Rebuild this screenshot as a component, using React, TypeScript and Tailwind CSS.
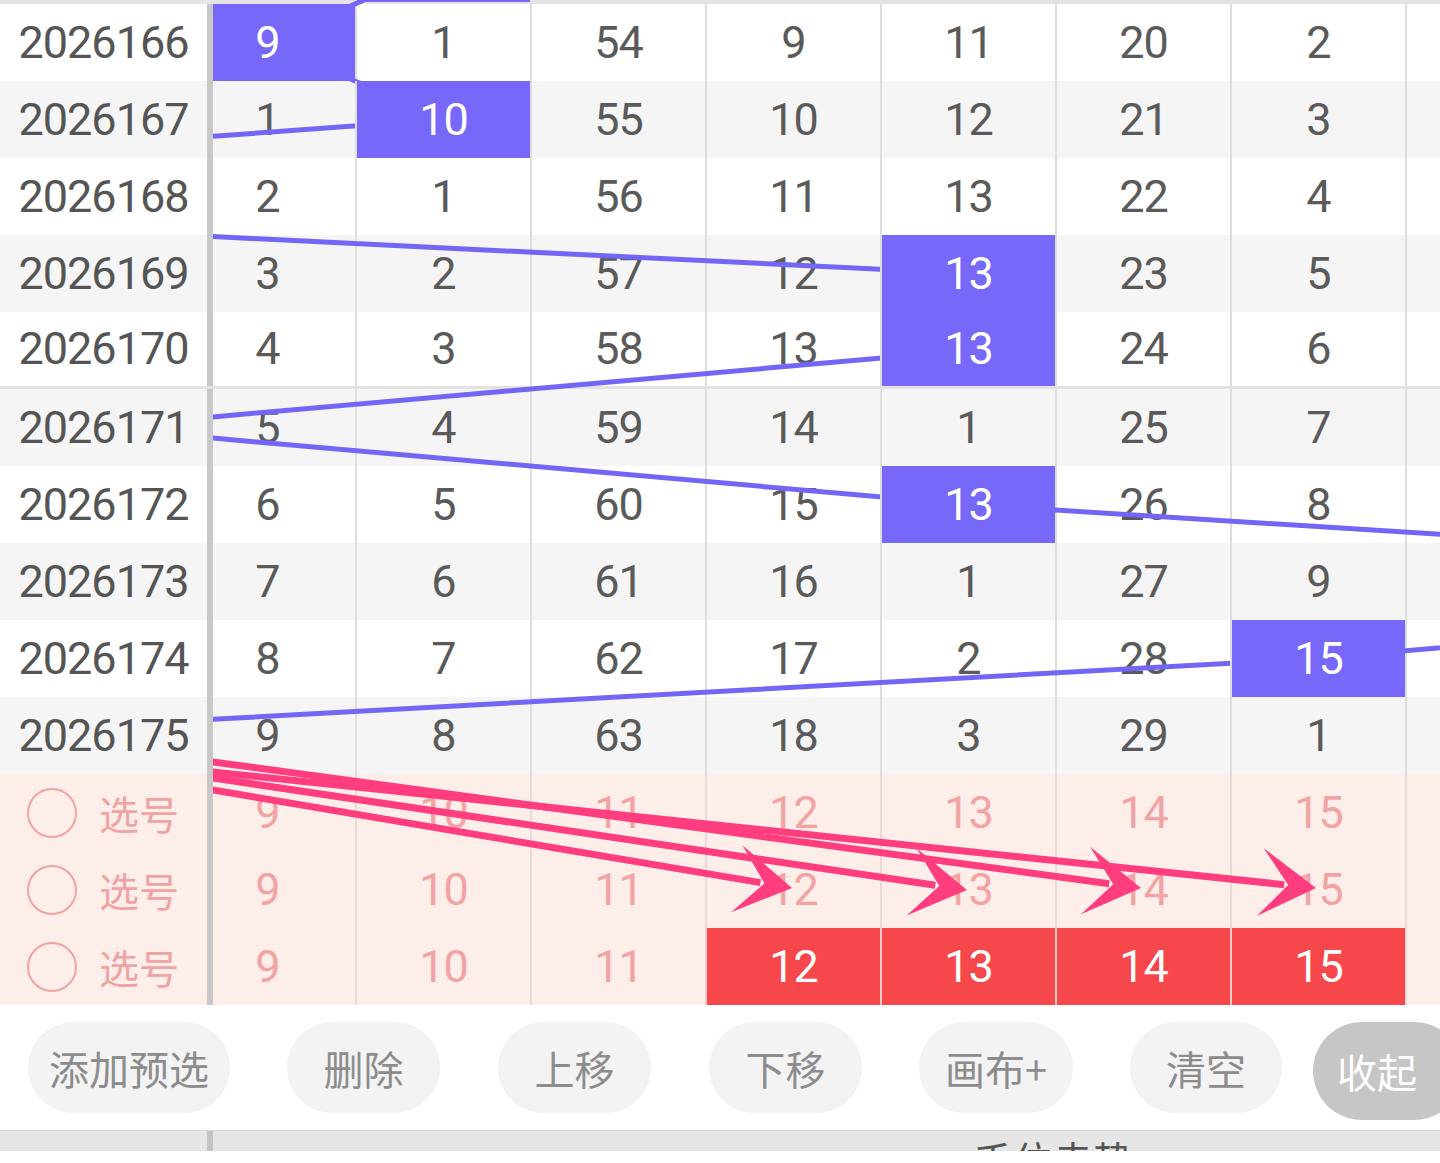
import React from "react";

type Row = {
  id: string;
  nums: number[];
  hit: number[];
};

const rows: Row[] = [
  { id: "2026166", nums: [9, 1, 54, 9, 11, 20, 2], hit: [0] },
  { id: "2026167", nums: [1, 10, 55, 10, 12, 21, 3], hit: [1] },
  { id: "2026168", nums: [2, 1, 56, 11, 13, 22, 4], hit: [] },
  { id: "2026169", nums: [3, 2, 57, 12, 13, 23, 5], hit: [4] },
  { id: "2026170", nums: [4, 3, 58, 13, 13, 24, 6], hit: [4] },
  { id: "2026171", nums: [5, 4, 59, 14, 1, 25, 7], hit: [] },
  { id: "2026172", nums: [6, 5, 60, 15, 13, 26, 8], hit: [4] },
  { id: "2026173", nums: [7, 6, 61, 16, 1, 27, 9], hit: [] },
  { id: "2026174", nums: [8, 7, 62, 17, 2, 28, 15], hit: [6] },
  { id: "2026175", nums: [9, 8, 63, 18, 3, 29, 1], hit: [] },
];

const picks = [
  { red: [] as number[] },
  { red: [] as number[] },
  { red: [3, 4, 5, 6] },
];

const pickNums = [9, 10, 11, 12, 13, 14, 15];

const buttons = [
  { label: "添加预选", w: "w-[202px]", ml: "ml-[28px]" },
  { label: "删除", w: "w-[153px]", ml: "ml-[57px]" },
  { label: "上移", w: "w-[153px]", ml: "ml-[58px]" },
  { label: "下移", w: "w-[153px]", ml: "ml-[58px]" },
  { label: "画布+", w: "w-[154px]", ml: "ml-[57px]" },
  { label: "清空", w: "w-[152px]", ml: "ml-[57px]" },
];

// trend line geometry, in page pixels
const TOP = 4;
const ROW_H = 77;
const cx = (c: number) => 267.5 + 175 * c;
const cy = (r: number) => TOP + ROW_H * r + 38.5;

// [column, row] of each hit, including columns scrolled out of view
const trend: [number, number][] = [
  [1, -1],
  [0, 0],
  [1, 1],
  [-5, 2],
  [4, 3],
  [4, 4],
  [-1, 5],
  [4, 6],
  [11, 7],
  [6, 8],
  [-2, 9],
];

const arrows = [
  { from: [213, 790], to: [792, 888] },
  { from: [213, 778], to: [967, 890] },
  { from: [213, 762], to: [1141, 888] },
  { from: [213, 772], to: [1316, 888] },
];

function arrowParts(from: number[], to: number[]) {
  const [fx, fy] = from;
  const [tx, ty] = to;
  const dx = tx - fx;
  const dy = ty - fy;
  const len = Math.hypot(dx, dy);
  const ux = dx / len;
  const uy = dy / len;
  const nx = -uy;
  const ny = ux;
  const back = 56;
  const side = 34;
  const notch = 28;
  const head = [
    [tx, ty],
    [tx - ux * back + nx * side, ty - uy * back + ny * side],
    [tx - ux * notch, ty - uy * notch],
    [tx - ux * back - nx * side, ty - uy * back - ny * side],
  ]
    .map((p) => p.join(","))
    .join(" ");
  const start = [fx - ux * 80, fy - uy * 80];
  const end = [tx - ux * (notch + 4), ty - uy * (notch + 4)];
  return { head, start, end };
}

const numFont = "font-['Roboto','Noto_Sans',sans-serif] text-[45px] tracking-[-1px]";
const cjkFont = "font-['Noto_Sans_CJK_SC','Noto_Sans',sans-serif]";

function colClass(c: number) {
  if (c === 0) return "w-[142px] pr-[33px]";
  return "w-[175px] border-l-2";
}

export default function App() {
  return (
    <div className="w-[1440px] h-[1163px] overflow-hidden bg-white">
      <div className="relative">
        {/* separator left over from the previous group */}
        <div className="h-1 bg-[#e4e4e4] flex">
          <div className="w-[357px]" />
          <div className="w-[173px] h-[2px] bg-[#7768fa]" />
        </div>

        {rows.map((row, r) => (
          <div
            key={row.id}
            className={`flex h-[77px] ${r % 2 === 0 ? "bg-white" : "bg-[#f5f5f5]"} ${
              r === 4 ? "border-b-[3px] border-[#e2e2e2]" : ""
            }`}
          >
            <div
              className={`w-[213px] shrink-0 border-r-[6px] border-[#c8c8c8] flex items-center justify-center text-[#555] ${numFont}`}
            >
              {row.id}
            </div>
            {row.nums.map((n, c) => {
              const hit = row.hit.includes(c);
              return (
                <div
                  key={c}
                  className={`${colClass(c)} shrink-0 border-[#dddddd] flex items-center justify-center ${numFont} ${
                    hit ? "relative z-20 bg-[#7768fa] text-white" : "text-[#5a5a5a]"
                  }`}
                >
                  {n}
                </div>
              );
            })}
            <div className="flex-1 border-l-2 border-[#dddddd]" />
          </div>
        ))}

        {picks.map((p, i) => (
          <div key={i} className="flex h-[77px] bg-[#fdeee9]">
            <div className="w-[213px] shrink-0 border-r-[6px] border-[#c8c8c8] flex items-center pl-[27px]">
              <div className="w-[50px] h-[50px] rounded-full border-[2.5px] border-[#f0a3a3]" />
              <span className={`ml-[22px] text-[40px] leading-none text-[#f0a3a3] ${cjkFont}`}>
                选号
              </span>
            </div>
            {pickNums.map((n, c) => {
              const red = p.red.includes(c);
              return (
                <div
                  key={c}
                  className={`${colClass(c)} shrink-0 flex items-center justify-center ${numFont} ${
                    red
                      ? "bg-[#f6474a] text-white border-[#f7c9c9]"
                      : "text-[#f2a3a3] border-[#e6dbd8]"
                  }`}
                >
                  {n}
                </div>
              );
            })}
            <div className="flex-1 border-l-2 border-[#e6dbd8]" />
          </div>
        ))}

        <svg
          className="absolute top-0 left-[213px] z-10 pointer-events-none"
          width={1227}
          height={1005}
          viewBox="213 0 1227 1005"
        >
          <polyline
            points={trend.map(([c, r]) => `${cx(c)},${cy(r)}`).join(" ")}
            fill="none"
            stroke="#7366f5"
            strokeWidth={5}
            strokeLinejoin="round"
          />
          {arrows.map((a, i) => {
            const { head, start, end } = arrowParts(a.from, a.to);
            return (
              <g key={i}>
                <line
                  x1={start[0]}
                  y1={start[1]}
                  x2={end[0]}
                  y2={end[1]}
                  stroke="#ff3d7f"
                  strokeWidth={7}
                />
                <polygon points={head} fill="#ff3d7f" />
              </g>
            );
          })}
        </svg>
      </div>

      {/* action bar */}
      <div className="h-[125px] flex items-start pt-[17px] overflow-hidden">
        {buttons.map((b) => (
          <button
            key={b.label}
            className={`${b.w} ${b.ml} shrink-0 h-[91px] rounded-full bg-[#f3f3f3] text-[#8c8c8c] text-[40px] leading-none ${cjkFont}`}
          >
            {b.label}
          </button>
        ))}
        <button
          className={`ml-[31px] shrink-0 w-[150px] h-[98px] rounded-full bg-[#c6c6c6] text-white text-[40px] leading-none text-left pl-[24px] ${cjkFont}`}
        >
          收起
        </button>
      </div>

      <div className="h-[21px] bg-[#e6e6e6] border-t border-[#dcdcdc] flex overflow-hidden">
        <div className="w-[213px] shrink-0 border-r-[6px] border-[#c4c4c4]" />
        <div className="flex-1 pl-[760px] pt-[8px]">
          <span className={`text-[40px] leading-none text-[#555] ${cjkFont}`}>千位走势</span>
        </div>
      </div>
    </div>
  );
}
